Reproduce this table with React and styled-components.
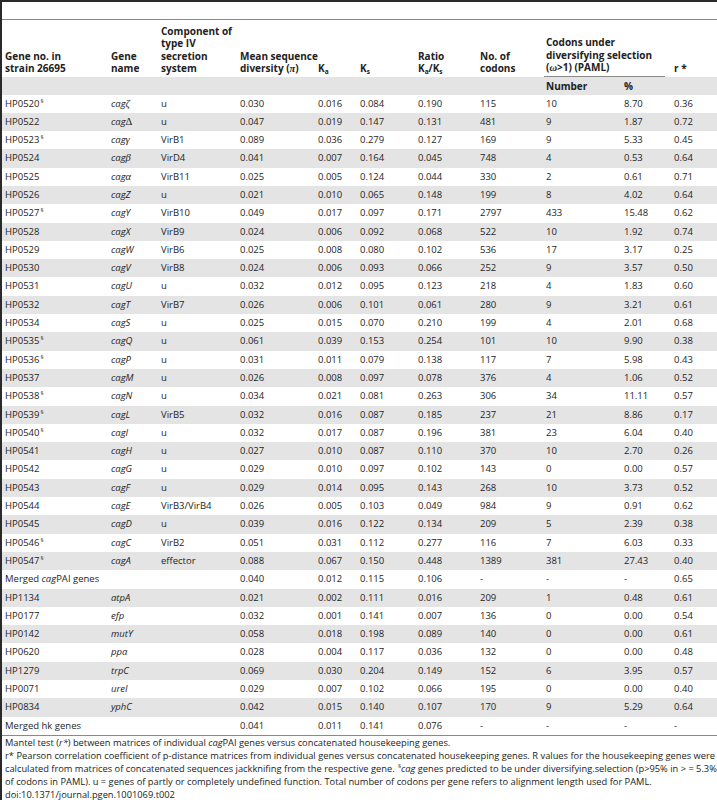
import React from "react";
import styled, { createGlobalStyle } from "styled-components";

const GlobalStyle = createGlobalStyle`
  * {
    margin: 0;
    padding: 0;
    box-sizing: border-box;
  }
  body {
    background: #fff;
    color: #1e1e1e;
    font-family: "Open Sans", "DejaVu Sans", sans-serif;
  }
`;

const cols = [106, 50, 79, 78, 42, 58, 62, 66, 78, 50, 46];

const rows = [
  { id: "HP0520", s: true, n: "cag", g: "ζ", c: "u", v: ["0.030", "0.016", "0.084", "0.190", "115", "10", "8.70", "0.36"] },
  { id: "HP0522", n: "cag", g: "Δ", up: true, c: "u", v: ["0.047", "0.019", "0.147", "0.131", "481", "9", "1.87", "0.72"] },
  { id: "HP0523", s: true, n: "cag", g: "γ", c: "VirB1", v: ["0.089", "0.036", "0.279", "0.127", "169", "9", "5.33", "0.45"] },
  { id: "HP0524", n: "cag", g: "β", c: "VirD4", v: ["0.041", "0.007", "0.164", "0.045", "748", "4", "0.53", "0.64"] },
  { id: "HP0525", n: "cag", g: "α", c: "VirB11", v: ["0.025", "0.005", "0.124", "0.044", "330", "2", "0.61", "0.71"] },
  { id: "HP0526", n: "cagZ", c: "u", v: ["0.021", "0.010", "0.065", "0.148", "199", "8", "4.02", "0.64"] },
  { id: "HP0527", s: true, n: "cagY", c: "VirB10", v: ["0.049", "0.017", "0.097", "0.171", "2797", "433", "15.48", "0.62"] },
  { id: "HP0528", n: "cagX", c: "VirB9", v: ["0.024", "0.006", "0.092", "0.068", "522", "10", "1.92", "0.74"] },
  { id: "HP0529", n: "cagW", c: "VirB6", v: ["0.025", "0.008", "0.080", "0.102", "536", "17", "3.17", "0.25"] },
  { id: "HP0530", n: "cagV", c: "VirB8", v: ["0.024", "0.006", "0.093", "0.066", "252", "9", "3.57", "0.50"] },
  { id: "HP0531", n: "cagU", c: "u", v: ["0.032", "0.012", "0.095", "0.123", "218", "4", "1.83", "0.60"] },
  { id: "HP0532", n: "cagT", c: "VirB7", v: ["0.026", "0.006", "0.101", "0.061", "280", "9", "3.21", "0.61"] },
  { id: "HP0534", n: "cagS", c: "u", v: ["0.025", "0.015", "0.070", "0.210", "199", "4", "2.01", "0.68"] },
  { id: "HP0535", s: true, n: "cagQ", c: "u", v: ["0.061", "0.039", "0.153", "0.254", "101", "10", "9.90", "0.38"] },
  { id: "HP0536", s: true, n: "cagP", c: "u", v: ["0.031", "0.011", "0.079", "0.138", "117", "7", "5.98", "0.43"] },
  { id: "HP0537", n: "cagM", c: "u", v: ["0.026", "0.008", "0.097", "0.078", "376", "4", "1.06", "0.52"] },
  { id: "HP0538", s: true, n: "cagN", c: "u", v: ["0.034", "0.021", "0.081", "0.263", "306", "34", "11.11", "0.57"] },
  { id: "HP0539", s: true, n: "cagL", c: "VirB5", v: ["0.032", "0.016", "0.087", "0.185", "237", "21", "8.86", "0.17"] },
  { id: "HP0540", s: true, n: "cagI", c: "u", v: ["0.032", "0.017", "0.087", "0.196", "381", "23", "6.04", "0.40"] },
  { id: "HP0541", n: "cagH", c: "u", v: ["0.027", "0.010", "0.087", "0.110", "370", "10", "2.70", "0.26"] },
  { id: "HP0542", n: "cagG", c: "u", v: ["0.029", "0.010", "0.097", "0.102", "143", "0", "0.00", "0.57"] },
  { id: "HP0543", n: "cagF", c: "u", v: ["0.029", "0.014", "0.095", "0.143", "268", "10", "3.73", "0.52"] },
  { id: "HP0544", n: "cagE", c: "VirB3/VirB4", v: ["0.026", "0.005", "0.103", "0.049", "984", "9", "0.91", "0.62"] },
  { id: "HP0545", n: "cagD", c: "u", v: ["0.039", "0.016", "0.122", "0.134", "209", "5", "2.39", "0.38"] },
  { id: "HP0546", s: true, n: "cagC", c: "VirB2", v: ["0.051", "0.031", "0.112", "0.277", "116", "7", "6.03", "0.33"] },
  { id: "HP0547", s: true, n: "cagA", c: "effector", v: ["0.088", "0.067", "0.150", "0.448", "1389", "381", "27.43", "0.40"] },
  { merged: "cag", v: ["0.040", "0.012", "0.115", "0.106", "-", "-", "-", "0.65"] },
  { id: "HP1134", n: "atpA", v: ["0.021", "0.002", "0.111", "0.016", "209", "1", "0.48", "0.61"] },
  { id: "HP0177", n: "efp", v: ["0.032", "0.001", "0.141", "0.007", "136", "0", "0.00", "0.54"] },
  { id: "HP0142", n: "mutY", v: ["0.058", "0.018", "0.198", "0.089", "140", "0", "0.00", "0.61"] },
  { id: "HP0620", n: "ppa", v: ["0.028", "0.004", "0.117", "0.036", "132", "0", "0.00", "0.48"] },
  { id: "HP1279", n: "trpC", v: ["0.069", "0.030", "0.204", "0.149", "152", "6", "3.95", "0.57"] },
  { id: "HP0071", n: "ureI", v: ["0.029", "0.007", "0.102", "0.066", "195", "0", "0.00", "0.40"] },
  { id: "HP0834", n: "yphC", v: ["0.042", "0.015", "0.140", "0.107", "170", "9", "5.29", "0.64"] },
  { merged: "hk", v: ["0.041", "0.011", "0.141", "0.076", "-", "-", "-", "-"] },
];

const Frame = styled.div`
  width: 717px;
  min-height: 800px;
  border-left: 2px solid #2a2a2a;
  border-top: 2px solid #2a2a2a;
`;

const CaptionGap = styled.div`
  height: 17px;
`;

const Table = styled.table`
  width: 715px;
  border-collapse: collapse;
  table-layout: fixed;
  border-top: 1px solid #8a8a8a;
  border-bottom: 1px solid #8a8a8a;
`;

const HeadRow = styled.tr`
  height: 57px;
`;

const Th = styled.th`
  text-align: left;
  vertical-align: bottom;
  font-size: 10px;
  font-weight: 700;
  line-height: 12.4px;
  padding: 0 3px 2px;
  color: #222;
  white-space: nowrap;
`;

const GroupTh = styled(Th)`
  padding: 0 6px 0 1px;
`;

const GroupLabel = styled.div`
  padding: 0 0 2px 2px;
  border-bottom: 1px solid #8a8a8a;
`;

const SubRow = styled.tr`
  height: 18px;
  background: #e4e4e4;
`;

const SubTh = styled.th`
  text-align: left;
  font-size: 10px;
  font-weight: 700;
  line-height: 18px;
  padding: 0 3px;
  color: #222;
`;

const Row = styled.tr`
  height: 18.3px;
  background: ${(p) => (p.$shade ? "#e4e4e4" : "#fff")};
`;

const Td = styled.td`
  font-size: 9.5px;
  line-height: 18.3px;
  height: 18.3px;
  padding: 0 3px;
  white-space: nowrap;
  overflow: visible;
`;

const I = styled.i`
  font-style: italic;
`;

const Greek = styled.span`
  font-family: "Liberation Serif", "DejaVu Serif", serif;
  font-style: ${(p) => (p.$upright ? "normal" : "italic")};
  font-size: 10.5px;
  line-height: 0;
`;

const Sup = styled.span`
  font-size: 6px;
  line-height: 0;
  vertical-align: baseline;
  position: relative;
  top: -4px;
  margin-left: 1px;
`;

const Sub = styled.span`
  font-size: 6.5px;
  line-height: 0;
  vertical-align: baseline;
  position: relative;
  top: 2px;
`;

const Notes = styled.div`
  padding: 1px 0 0 3px;
  width: 713px;
  font-size: 9.3px;
  line-height: 12.9px;
  color: #222;
`;

const NoteLine = styled.p`
  white-space: nowrap;
  text-align: ${(p) => (p.$justify ? "justify" : "left")};
  text-align-last: ${(p) => (p.$justify ? "justify" : "auto")};
`;

const Name = ({ r }) => (
  <>
    <I>{r.n}</I>
    {r.g && <Greek $upright={r.up}>{r.g}</Greek>}
  </>
);

const App = () => {
  return (
    <>
      <GlobalStyle />
      <Frame>
        <CaptionGap />
        <Table>
          <colgroup>
            {cols.map((w, i) => (
              <col key={i} style={{ width: w }} />
            ))}
          </colgroup>
          <thead>
            <HeadRow>
              <Th>
                Gene no. in
                <br />
                strain 26695
              </Th>
              <Th>
                Gene
                <br />
                name
              </Th>
              <Th>
                Component of
                <br />
                type IV
                <br />
                secretion
                <br />
                system
              </Th>
              <Th>
                Mean sequence
                <br />
                diversity (<Greek>π</Greek>)
              </Th>
              <Th>
                K<Sub>a</Sub>
              </Th>
              <Th>
                K<Sub>s</Sub>
              </Th>
              <Th>
                Ratio
                <br />
                K<Sub>a</Sub>/K<Sub>s</Sub>
              </Th>
              <Th>
                No. of
                <br />
                codons
              </Th>
              <GroupTh colSpan={2}>
                <GroupLabel>
                  Codons under
                  <br />
                  diversifying selection
                  <br />
                  (<Greek>ω</Greek>&gt;1) (PAML)
                </GroupLabel>
              </GroupTh>
              <Th>r *</Th>
            </HeadRow>
            <SubRow>
              <td colSpan={8} />
              <SubTh>Number</SubTh>
              <SubTh>%</SubTh>
              <td />
            </SubRow>
          </thead>
          <tbody>
            {rows.map((r, i) => (
              <Row key={i} $shade={i % 2 === 1}>
                {r.merged ? (
                  <Td colSpan={3}>
                    {r.merged === "cag" ? (
                      <>
                        Merged <I>cag</I>PAI genes
                      </>
                    ) : (
                      "Merged hk genes"
                    )}
                  </Td>
                ) : (
                  <>
                    <Td>
                      {r.id}
                      {r.s && <Sup>§</Sup>}
                    </Td>
                    <Td>
                      <Name r={r} />
                    </Td>
                    <Td>{r.c}</Td>
                  </>
                )}
                {r.v.map((x, j) => (
                  <Td key={j}>{x}</Td>
                ))}
              </Row>
            ))}
          </tbody>
        </Table>
        <Notes>
          <NoteLine>
            Mantel test (<I>r*</I>) between matrices of individual <I>cag</I>PAI genes versus concatenated housekeeping genes.
          </NoteLine>
          <NoteLine $justify>
            r* Pearson correlation coefficient of p-distance matrices from individual genes versus concatenated housekeeping genes. R values for the housekeeping genes were
          </NoteLine>
          <NoteLine $justify>
            calculated from matrices of concatenated sequences jackknifing from the respective gene. <Sup>§</Sup>
            <I>cag</I> genes predicted to be under diversifying.selection (p&gt;95% in &gt; = 5.3%
          </NoteLine>
          <NoteLine>
            of codons in PAML). u = genes of partly or completely undefined function. Total number of codons per gene refers to alignment length used for PAML.
          </NoteLine>
          <NoteLine>doi:10.1371/journal.pgen.1001069.t002</NoteLine>
        </Notes>
      </Frame>
    </>
  );
};

export default App;
